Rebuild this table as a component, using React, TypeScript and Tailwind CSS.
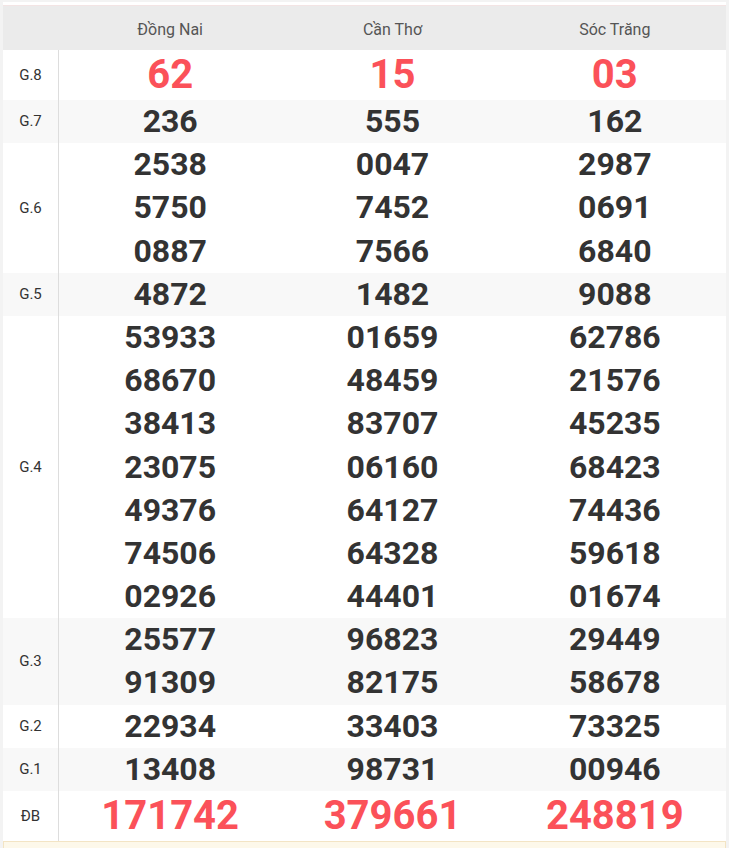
import React from 'react';

const provinces = ['Đồng Nai', 'Cần Thơ', 'Sóc Trăng'];

type Row = { label: string; values: string[][]; red?: boolean; shade?: boolean };

const rows: Row[] = [
  { label: 'G.8', values: [['62'], ['15'], ['03']], red: true },
  { label: 'G.7', values: [['236'], ['555'], ['162']], shade: true },
  { label: 'G.6', values: [['2538', '5750', '0887'], ['0047', '7452', '7566'], ['2987', '0691', '6840']] },
  { label: 'G.5', values: [['4872'], ['1482'], ['9088']], shade: true },
  {
    label: 'G.4',
    values: [
      ['53933', '68670', '38413', '23075', '49376', '74506', '02926'],
      ['01659', '48459', '83707', '06160', '64127', '64328', '44401'],
      ['62786', '21576', '45235', '68423', '74436', '59618', '01674'],
    ],
  },
  { label: 'G.3', values: [['25577', '91309'], ['96823', '82175'], ['29449', '58678']], shade: true },
  { label: 'G.2', values: [['22934'], ['33403'], ['73325']] },
  { label: 'G.1', values: [['13408'], ['98731'], ['00946']], shade: true },
  { label: 'ĐB', values: [['171742'], ['379661'], ['248819']], red: true },
];

const App: React.FC = () => {
  return (
    <div className="min-h-[848px] bg-[#f3f3f3] px-[3px] pt-[2px]" style={{ fontFamily: 'Roboto, "Liberation Sans", sans-serif' }}>
      <div className="bg-white pt-[3px]">
        {/* header */}
        <div className="grid grid-cols-[56px_1fr_1fr_1fr] bg-[#ebebeb] h-[45px] border-t border-[#f3e4e4] pt-[3px]">
          <div />
          {provinces.map((p) => (
            <div key={p} className="flex items-center justify-center text-[16px] text-[#555]">
              {p}
            </div>
          ))}
        </div>

        {rows.map((r) => (
          <div
            key={r.label}
            className={`grid grid-cols-[56px_1fr_1fr_1fr] ${r.shade ? 'bg-[#f8f8f8]' : 'bg-white'}`}
          >
            <div className="flex items-center justify-center border-r border-[#dddddd] text-[15px] text-[#333]">
              {r.label}
            </div>
            {r.values.map((col, i) => (
              <div key={i} className="flex flex-col items-center">
                {col.map((v) => (
                  <div
                    key={v}
                    className={
                      r.red
                        ? 'h-[50px] leading-[50px] text-[40px] font-bold text-[#fb5159]'
                        : 'h-[43.2px] leading-[43.2px] text-[32px] font-bold text-[#333]'
                    }
                  >
                    {v}
                  </div>
                ))}
              </div>
            ))}
          </div>
        ))}

        <div className="h-[8px] bg-[#fdf8ea] border border-[#f3e4c4]" />
      </div>
    </div>
  );
};

export default App;
